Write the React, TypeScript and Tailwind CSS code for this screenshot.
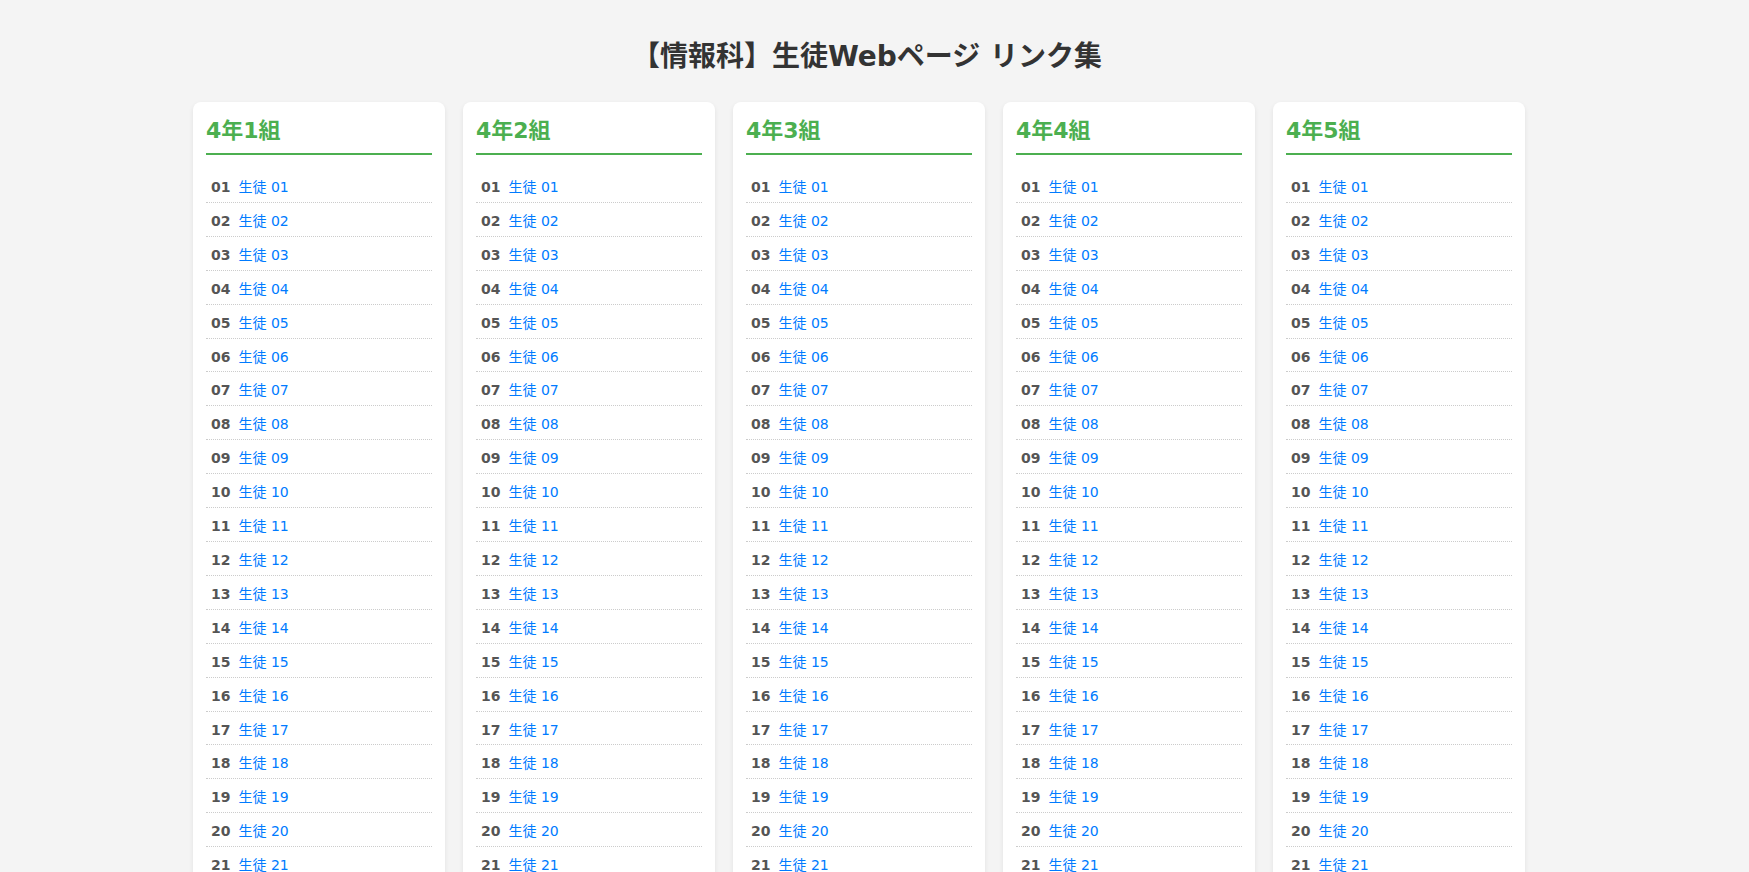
import React from "react";

const classes = ["4年1組", "4年2組", "4年3組", "4年4組", "4年5組"];
const nums = Array.from({ length: 40 }, (_, i) => String(i + 1).padStart(2, "0"));

export default function App() {
  return (
    <div
      className="min-h-screen bg-[#f4f4f4] pr-[15px] text-[#333]"
      style={{ fontFamily: '"DejaVu Sans", "Noto Sans CJK JP", sans-serif' }}
    >
      <h1 className="pt-[36px] text-center text-[28px] font-bold leading-[42px] text-[#333]">
        【情報科】生徒Webページ リンク集
      </h1>
      <div className="mt-[24px] flex justify-center gap-[18px] pr-[16px]">
        {classes.map((c) => (
          <div
            key={c}
            className="w-[252px] rounded-[8px] bg-white px-[13px] pt-[15px] shadow-[0_2px_5px_rgba(0,0,0,0.08)]"
          >
            <h3 className="border-b-2 border-[#4caf50] pb-[9px] text-[22px] font-bold leading-[27px] text-[#4caf50]">
              {c}
            </h3>
            <ul className="mt-[14px]">
              {nums.map((n) => (
                <li
                  key={n}
                  className="flex items-center border-b border-dotted border-[#ccc] px-[5px] pt-[10px] pb-[6px] text-[14px] leading-[16.9px]"
                >
                  <span className="mr-[8px] font-bold text-[#555]">{n}</span>
                  <a href="#" className="text-[#007bff]">
                    生徒 {n}
                  </a>
                </li>
              ))}
            </ul>
          </div>
        ))}
      </div>
    </div>
  );
}
